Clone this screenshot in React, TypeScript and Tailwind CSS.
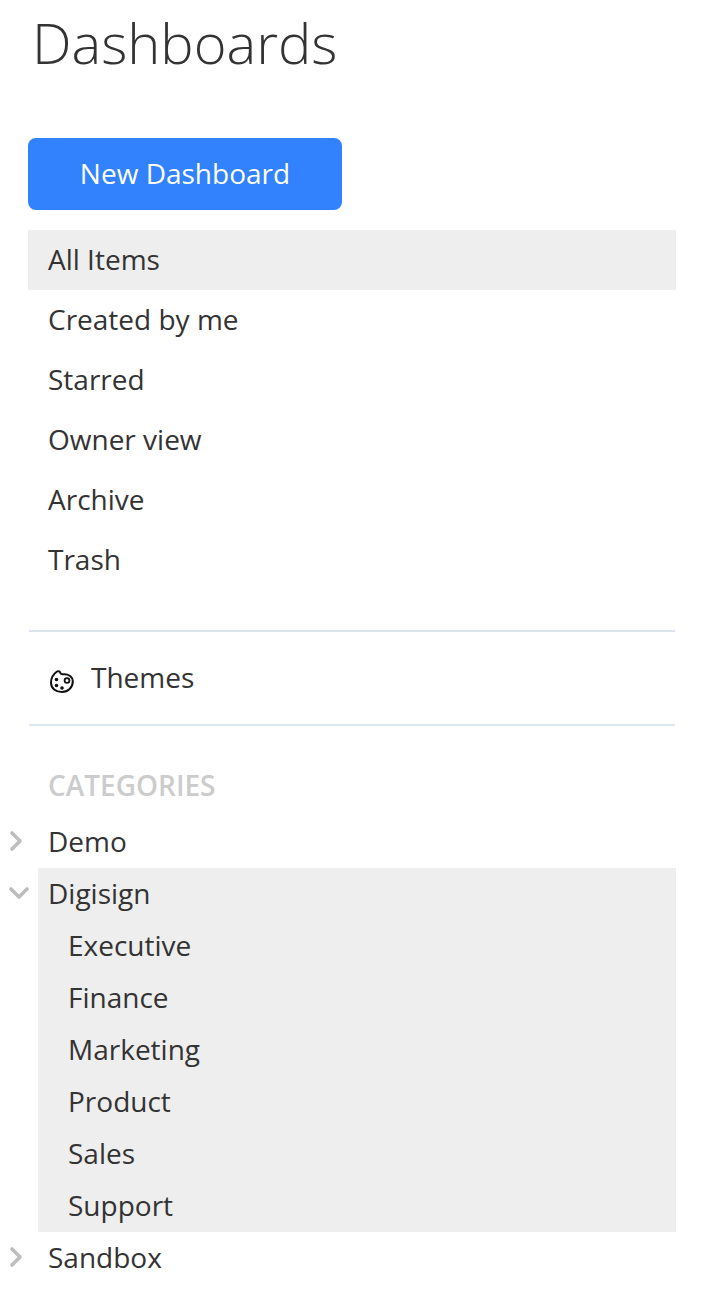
import React from 'react';
import { ChevronRight, ChevronDown } from 'lucide-react';

const views = ['All Items', 'Created by me', 'Starred', 'Owner view', 'Archive', 'Trash'];
const digisign = ['Executive', 'Finance', 'Marketing', 'Product', 'Sales', 'Support'];

function PaletteIcon() {
    return (
        <svg width="26" height="26" viewBox="0 0 26 26" fill="none" className="shrink-0 mt-2">
            <path
                d="M8 2.500c1.800-1 3 .3 3.500 1.700.4 1 1.200 1.300 2.300 1.100 5-.8 10 2.200 10 7.200 0 6-4.800 10.500-10.800 10.500-6.300 0-11-3.700-11-9.200 0-4.500 2.700-9 6-11.300z"
                stroke="#111"
                strokeWidth="2"
                strokeLinejoin="round"
            />
            <circle cx="18" cy="11.500" r="2.400" stroke="#111" strokeWidth="1.800" />
            <circle cx="7.500" cy="10.500" r="1.800" fill="#111" />
            <circle cx="7.500" cy="16.500" r="1.800" fill="#111" />
            <circle cx="13" cy="19" r="1.800" fill="#111" />
        </svg>
    );
}

function CategoryRow({ name, open }: { name: string; open?: boolean }) {
    return (
        <div className="flex h-[52px]">
            <div className={`w-[38px] shrink-0 flex items-center pb-[3px] text-[#bdbdbd] ${open ? 'pl-[3px]' : ''}`}>
                {open ? <ChevronDown size={32} strokeWidth={2.700} /> : <ChevronRight size={32} strokeWidth={2.700} />}
            </div>
            <div className={`flex-1 flex items-center pl-2.5 pb-0.5 ${open ? 'bg-[#eeeeee]' : ''}`}>{name}</div>
        </div>
    );
}

export default function App() {
    return (
        <div className="w-[704px] h-[1312px] bg-white text-[#333333] text-[28px] overflow-hidden" style={{ fontFamily: '"Open Sans", sans-serif' }}>
            <div className="pr-7">
                <h1 className="pl-8 pt-px h-[138px] text-[56px] font-light leading-[82px]">Dashboards</h1>

                <div className="pl-7">
                    <button className="w-[314px] h-[72px] pb-0.5 rounded-lg bg-[#3182fc] text-white text-[28px]">New Dashboard</button>

                    <nav className="mt-5">
                        {views.map((v, i) => (
                            <div key={v} className={`h-[60px] flex items-center pl-5 pb-0.5 ${i === 0 ? 'bg-[#eeeeee]' : ''}`}>
                                {v}
                            </div>
                        ))}
                    </nav>

                    <div className="mt-10 mx-px h-[96px] border-y-2 border-[#dce6f0] flex items-center pl-5 gap-4">
                        <PaletteIcon />
                        <span className="pb-0.5">Themes</span>
                    </div>

                    <div className="mt-[41px] pl-5 h-9 flex items-center text-[28px] font-semibold text-[#cccccc]">CATEGORIES</div>
                </div>

                <div className="mt-[13px]">
                    <CategoryRow name="Demo" />
                    <CategoryRow name="Digisign" open />
                    <div className="ml-[38px] bg-[#eeeeee]">
                        {digisign.map((d) => (
                            <div key={d} className="h-[52px] flex items-center pl-[30px] pb-0.5">
                                {d}
                            </div>
                        ))}
                    </div>
                    <CategoryRow name="Sandbox" />
                </div>
            </div>
        </div>
    );
}
